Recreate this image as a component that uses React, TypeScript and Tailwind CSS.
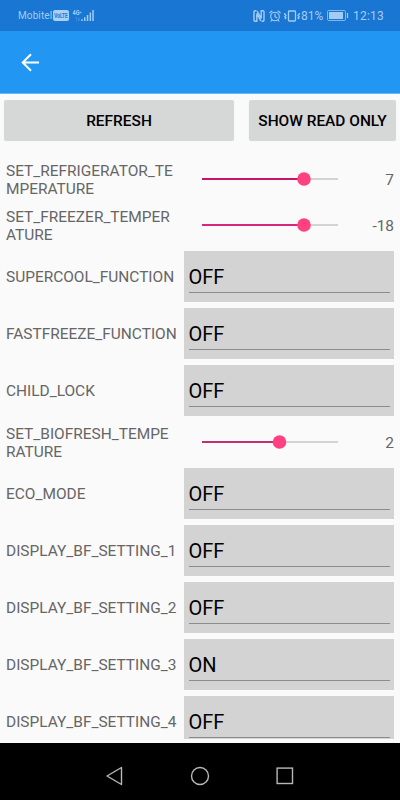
import React from "react";

type Row =
  | { kind: "slider"; label: string[]; value: string; pos: number; fill: string }
  | { kind: "field"; label: string; value: string };

const rows: Row[] = [
  { kind: "slider", label: ["SET_REFRIGERATOR_TE", "MPERATURE"], value: "7", pos: 102, fill: "#c8136a" },
  { kind: "slider", label: ["SET_FREEZER_TEMPER", "ATURE"], value: "-18", pos: 102, fill: "#d8287a" },
  { kind: "field", label: "SUPERCOOL_FUNCTION", value: "OFF" },
  { kind: "field", label: "FASTFREEZE_FUNCTION", value: "OFF" },
  { kind: "field", label: "CHILD_LOCK", value: "OFF" },
  { kind: "slider", label: ["SET_BIOFRESH_TEMPE", "RATURE"], value: "2", pos: 77.5, fill: "#c0306f" },
  { kind: "field", label: "ECO_MODE", value: "OFF" },
  { kind: "field", label: "DISPLAY_BF_SETTING_1", value: "OFF" },
  { kind: "field", label: "DISPLAY_BF_SETTING_2", value: "OFF" },
  { kind: "field", label: "DISPLAY_BF_SETTING_3", value: "ON" },
  { kind: "field", label: "DISPLAY_BF_SETTING_4", value: "OFF" },
];

function StatusBar() {
  return (
    <div className="flex h-[31px] shrink-0 items-center bg-[#1976d2] pl-[18px] pr-[16px] text-[#a3ccf3]">
      <span className="w-[35px] whitespace-nowrap text-[10px] leading-[12px] tracking-[0.1px]">Mobitel</span>
      <svg className="overflow-visible" width="16" height="11" viewBox="0 0 16 11">
        <rect width="16" height="11" rx="2" fill="#a9d0f5" />
        <text x="1.300" y="8" fontSize="6.500" fontWeight="700" fill="#1976d2" textLength="13.500" lengthAdjust="spacingAndGlyphs">VoLTE</text>
      </svg>
      <svg className="ml-[3px] overflow-visible" width="23" height="13" viewBox="0 0 23 13" fill="currentColor">
        <text x="0.500" y="6" fontSize="6.500" fontWeight="700" textLength="7" lengthAdjust="spacingAndGlyphs">4G</text>
        <text x="7.600" y="4.500" fontSize="4" fontWeight="700">+</text>
        <text x="3" y="12" fontSize="4.500" opacity="0.5">1x</text>
        <path d="M9.200 10.200h1.500v1.800H9.200zM12 8.200h1.500v3.800h-1.500zM14.800 6h1.500v6h-1.500zM17.600 3.500h1.500v8.500h-1.500zM20.300 1h1.500v11h-1.500z" />
      </svg>
      <div className="ml-auto flex items-center">
        <svg width="12" height="12" viewBox="0 0 12 12" fill="none" stroke="currentColor">
          <path d="M3.500 .8H2Q1 .8 1 2V10Q1 11.200 2 11.200H3.800V3.500L7.800 10.800M8.500 11.200H10Q11 11.200 11 10V2Q11 .8 10 .8H8.200V8.500L4.200 1.200" strokeWidth="1.4" />
        </svg>
        <svg className="ml-1" width="12" height="12" viewBox="0 0 12 12" fill="none" stroke="currentColor" strokeWidth="1.1" strokeLinecap="round">
          <circle cx="6" cy="6.500" r="4.300" />
          <path d="M6 4v2.700l1.800 1M.8 2.800 3 1M11.200 2.800 9 1M3 10.200l-1 1M9 10.200l1 1" />
        </svg>
        <svg className="ml-[3px]" width="16" height="12" viewBox="0 0 16 12" fill="none" stroke="currentColor">
          <rect x="4.500" y="1" width="7" height="10" rx=".8" strokeWidth="1.3" />
          <path d="M.8 3v1.400l1.200 1-1.200 1.200L2 7.800.8 9M15.200 3v1.400l-1.200 1 1.200 1.200L14 7.800 15.200 9" strokeWidth="1.300" />
        </svg>
        <span className="ml-[1px] w-[23px] whitespace-nowrap text-[12px] leading-[14px]">81%</span>
        <svg className="ml-[3px]" width="22" height="11" viewBox="0 0 22 11">
          <rect x=".5" y=".5" width="18" height="10" rx="1.300" fill="none" stroke="currentColor" opacity=".75" />
          <rect x="2" y="2" width="14" height="7" fill="currentColor" />
          <path d="M20.500 3v5" stroke="currentColor" strokeWidth="1.200" />
        </svg>
        <span className="ml-[4px] w-[31px] whitespace-nowrap text-[12px] leading-[14px] tracking-[0.2px]">12:13</span>
      </div>
    </div>
  );
}

function Slider({ pos, fill }: { pos: number; fill: string }) {
  return (
    <svg width="148" height="16" viewBox="-2 0 148 16">
      <rect x="0" y="7" width="136" height="2" fill="#d3d3d3" />
      <rect x="0" y="7" width={pos} height="2" fill={fill} />
      <circle cx={pos} cy="8" r="6.800" fill="#ff4081" />
    </svg>
  );
}

function SettingRow({ row }: { row: Row }) {
  if (row.kind === "slider") {
    return (
      <div className="flex h-[46px] shrink-0 items-center pl-[6px] pr-[6px]">
        <div className="w-[194px] whitespace-nowrap pt-[2px] text-[15.450px] leading-[18px]">
          {row.label.map((line) => (
            <div key={line}>{line}</div>
          ))}
        </div>
        <Slider pos={row.pos} fill={row.fill} />
        <span className="ml-auto pt-[2px] text-[15.450px] leading-[18px]">{row.value}</span>
      </div>
    );
  }
  return (
    <div className="flex h-[57px] shrink-0 items-start pl-[6px] pr-[6px] pt-[3px]">
      <span className="flex h-[52px] w-[178px] items-center whitespace-nowrap text-[15.450px] leading-[18px]">{row.label}</span>
      <div className="h-[50.500px] w-[210px] bg-[#d3d3d3] px-[4.500px] pt-[14px]">
        <div className="h-[27.500px] border-b-[1.500px] border-[#8c8c8c] text-[20px] leading-[24px] text-black">{row.value}</div>
      </div>
    </div>
  );
}

export default function App() {
  return (
    <div className="flex h-[800px] w-[400px] flex-col overflow-hidden bg-[#fafafa] font-['Roboto',sans-serif] text-[#666666]">
      <StatusBar />
      <header className="flex h-[63px] shrink-0 items-center border-b border-[#6bb7f8] bg-[#2196f3] pl-[21px]">
        <svg width="19" height="19" viewBox="0 0 19 19" fill="none" stroke="white" strokeWidth="2">
          <path d="M18 9.500H2M10 1.200 1.700 9.500 10 17.800" />
        </svg>
      </header>
      <main className="flex h-[649px] shrink-0 flex-col overflow-hidden pb-1">
        <div className="flex h-[62px] shrink-0 gap-[15px] pl-1 pt-[6px] text-[15.450px] font-medium leading-[18px] text-black">
          <button className="h-[40px] w-[230px] rounded-[2px] bg-[#d6d7d7] pt-[1px] shadow-[0_1px_1px_rgba(0,0,0,0.15)]">REFRESH</button>
          <button className="h-[40px] w-[147px] whitespace-nowrap rounded-[2px] bg-[#d6d7d7] pt-[1px] shadow-[0_1px_1px_rgba(0,0,0,0.15)]">SHOW READ ONLY</button>
        </div>
        <div className="flex min-h-0 flex-1 flex-col overflow-hidden">
          {rows.map((row, i) => (
            <SettingRow key={i} row={row} />
          ))}
        </div>
      </main>
      <nav className="flex h-[57px] shrink-0 items-center bg-black pl-[105px] pt-[9px]">
        <svg width="18" height="20" viewBox="0 0 18 20" fill="none" stroke="#b8b8b8" strokeWidth="1.400" strokeLinejoin="round">
          <path d="M16.500 1.500v17L2 10z" />
        </svg>
        <svg className="ml-[67px]" width="20" height="20" viewBox="0 0 20 20" fill="none" stroke="#b8b8b8" strokeWidth="1.400">
          <circle cx="10" cy="10" r="8.500" />
        </svg>
        <svg className="ml-[66px]" width="18" height="18" viewBox="0 0 18 18" fill="none" stroke="#b8b8b8" strokeWidth="1.400">
          <rect x="1.100" y="1.100" width="15.400" height="15.400" />
        </svg>
      </nav>
    </div>
  );
}
